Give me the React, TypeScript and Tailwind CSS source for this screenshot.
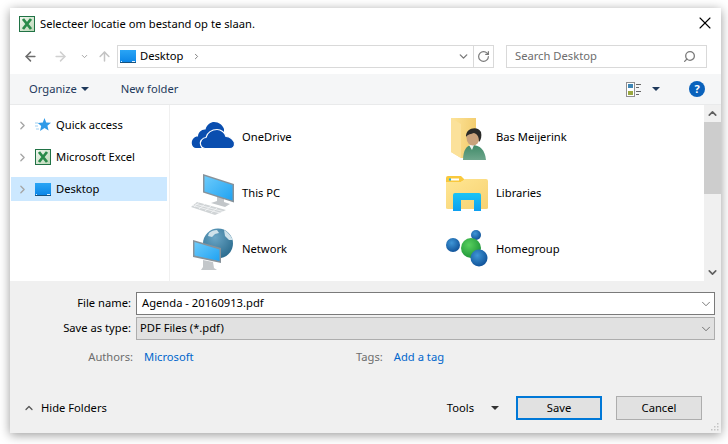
import { ReactNode } from 'react';
import { ChevronRight, ChevronDown, ChevronUp, ArrowLeft, ArrowRight, ArrowUp, RotateCw, Search, X } from 'lucide-react';

const Caret = ({ color = '#1e395b' }: { color?: string }) => (
  <svg width="8" height="4" viewBox="0 0 8 4" className="shrink-0">
    <polygon points="0,0 8,0 4,4" fill={color} />
  </svg>
);

const ExcelIcon = () => (
  <svg width="16" height="16" viewBox="0 0 16 16" className="shrink-0">
    <defs>
      <linearGradient id="xl" x1="0" y1="0" x2="1" y2="1">
        <stop offset="0" stopColor="#f4f8f2" />
        <stop offset="1" stopColor="#b9d6b4" />
      </linearGradient>
    </defs>
    <rect x="0.5" y="0.5" width="15" height="15" fill="url(#xl)" stroke="#207245" />
    <path d="M4 3 L12 13 M12 3 L4 13" stroke="#2a8a4a" strokeWidth="2.8" />
  </svg>
);

const DesktopIcon = () => (
  <svg width="16" height="13" viewBox="0 0 16 13" className="shrink-0">
    <defs>
      <linearGradient id="dk" x1="0" y1="0" x2="0" y2="1">
        <stop offset="0" stopColor="#2aa5f5" />
        <stop offset="1" stopColor="#0a84e6" />
      </linearGradient>
    </defs>
    <rect x="0" y="0" width="16" height="13" fill="url(#dk)" />
    <rect x="0" y="12" width="16" height="1" fill="#16527f" />
    <rect x="12" y="11" width="3" height="1" fill="#dff1fd" />
    <rect x="1" y="11" width="1" height="1" fill="#dff1fd" />
  </svg>
);

const StarIcon = () => (
  <svg width="16" height="14" viewBox="0 0 16 14" className="shrink-0">
    <polygon points="9.5,0 11.2,4.4 16,4.8 12.4,7.8 13.6,12.6 9.5,10 5,13 6.2,8 2.8,5 7.8,4.4" fill="#2f9be8" />
    <path d="M0 5h3M0 8h3M1 11h3" stroke="#9fd0f2" strokeWidth="1" />
  </svg>
);

const OneDriveIcon = () => (
  <svg width="48" height="48" viewBox="0 0 48 48">
    <path d="M7 35 C3 35 1.500 29 4 26 C5.500 24 7 23.500 9 23.500 C9 19 13 16 16.500 16.500 C18 11 22 9 25 9 C30 9 33.500 12 35 16 L35 24 L12 35Z" fill="#0a4eaf" />
    <path d="M16 35.500 C12 35.500 10 30 12.500 27 C14 25 15 24.500 17 24.500 C18 19.500 23 16.500 28 16.500 C32 16.500 36 19.500 37 23.500 C41 23.500 45.500 27 45.500 31 C45.500 33 44 35.500 41 35.500Z" fill="#0a4eaf" stroke="#ffffff" strokeWidth="1.200" />
  </svg>
);

const PcIcon = () => (
  <svg width="48" height="48" viewBox="0 0 48 48">
    <defs>
      <linearGradient id="scr" x1="0" y1="0" x2="1" y2="1">
        <stop offset="0" stopColor="#6ccbfb" />
        <stop offset="1" stopColor="#1fa2f2" />
      </linearGradient>
    </defs>
    <polygon points="28,26 35,29 35,33 41,35 36,38 22,34 28,32" fill="#c2c6c9" />
    <polygon points="14,5 45,15 45,33.500 14,23.500" fill="#87929a" />
    <polygon points="15.500,7 43.500,16 43.500,31.500 15.500,22.500" fill="url(#scr)" />
    <polygon points="8,33 37,41 26,46 2,38" fill="#d0d4d6" />
    <path d="M6 35 L34 42.500 M4 36.500 L31 44 M10 33.500 L5 38 M16 35 L10 40 M22 37 L16 42 M28 39 L22 44" stroke="#f5f6f7" strokeWidth="0.8" />
  </svg>
);

const NetworkIcon = () => (
  <svg width="48" height="48" viewBox="0 0 48 48">
    <defs>
      <radialGradient id="globe" cx="0.4" cy="0.3" r="0.8">
        <stop offset="0" stopColor="#6aa6c6" />
        <stop offset="1" stopColor="#256689" />
      </radialGradient>
      <linearGradient id="scr2" x1="0" y1="0" x2="1" y2="1">
        <stop offset="0" stopColor="#6ccbfb" />
        <stop offset="1" stopColor="#1fa2f2" />
      </linearGradient>
    </defs>
    <circle cx="29" cy="18.500" r="15" fill="url(#globe)" />
    <path d="M20 8 C22 6 25 5 28 5 L30 8 L26 9 L23 12 L19 11Z M35 5 C39 7 42 11 44 15 L40 15 L36 11Z" fill="#cfe2eb" />
    <polygon points="14,35 24,37 25,43 28,45 12,45 14,42" fill="#c3c7ca" />
    <polygon points="4,15 32,23 32,38 4,32" fill="#87929a" />
    <polygon points="5.500,17 30.500,24.500 30.500,36 5.500,30.500" fill="url(#scr2)" />
  </svg>
);

const UserFolderIcon = () => (
  <svg width="48" height="48" viewBox="0 0 48 48">
    <defs>
      <linearGradient id="uf" x1="0" y1="0" x2="1" y2="0.2">
        <stop offset="0" stopColor="#fde49a" />
        <stop offset="1" stopColor="#f3cd6f" />
      </linearGradient>
      <linearGradient id="ub" x1="0" y1="0" x2="0" y2="1">
        <stop offset="0" stopColor="#3f8a68" />
        <stop offset="1" stopColor="#6ea68c" />
      </linearGradient>
    </defs>
    <polygon points="8,5 33,5 33,30 22,45 18,45 8,39" fill="url(#uf)" />
    <path d="M8 5 L18 11 L18 45 L8 39Z" fill="#fbe19a" />
    <path d="M20 47 C20 37 24 32 29 32 C37 32 42 37 43 47Z" fill="url(#ub)" />
    <path d="M26 32 L31 32 L29 37Z" fill="#eef3f0" />
    <ellipse cx="30" cy="24.500" rx="6.500" ry="8" fill="#c9a27c" />
    <path d="M23 24 C22 15 35 12 38 19 C39 23 38 27 36 29 C36 23 34 21 31 20 C28 21 25 21 23 24Z" fill="#2a2a28" />
  </svg>
);

const LibrariesIcon = () => (
  <svg width="48" height="48" viewBox="0 0 48 48">
    <defs>
      <linearGradient id="lib" x1="0" y1="0" x2="1" y2="1">
        <stop offset="0" stopColor="#ffe693" />
        <stop offset="1" stopColor="#f7d272" />
      </linearGradient>
      <linearGradient id="arch" x1="0" y1="0" x2="0" y2="1">
        <stop offset="0" stopColor="#1bc4f5" />
        <stop offset="1" stopColor="#0d9ff0" />
      </linearGradient>
    </defs>
    <path d="M3 9 Q3 7 5 7 L18 7 L22 11 L18 13 L3 13Z" fill="#f9c93d" />
    <rect x="6" y="9.500" width="2" height="2" fill="#22b5ee" />
    <rect x="8" y="9.500" width="8" height="2" fill="#ffffff" />
    <path d="M3 13 L18 13 L22 10 L43 10 Q45 10 45 12 L45 39 Q45 40 43 40 L5 40 Q3 40 3 39Z" fill="url(#lib)" />
    <path d="M10 42 L10 26 Q10 24 12 24 L36 24 Q38 24 38 26 L38 42 L31 42 L31 31 L18 31 L18 42Z" fill="url(#arch)" />
  </svg>
);

const HomegroupIcon = () => (
  <svg width="48" height="48" viewBox="0 0 48 48">
    <defs>
      <radialGradient id="hb" cx="0.4" cy="0.35" r="0.7">
        <stop offset="0" stopColor="#3f96d6" />
        <stop offset="1" stopColor="#0e4f96" />
      </radialGradient>
      <radialGradient id="hg" cx="0.4" cy="0.35" r="0.7">
        <stop offset="0" stopColor="#58cf5e" />
        <stop offset="1" stopColor="#1c9436" />
      </radialGradient>
    </defs>
    <circle cx="10" cy="20" r="7" fill="url(#hb)" />
    <circle cx="33" cy="10" r="5" fill="url(#hb)" />
    <circle cx="28" cy="23" r="10" fill="url(#hg)" />
    <circle cx="36" cy="33" r="8.500" fill="url(#hb)" />
  </svg>
);

const ViewIcon = () => (
  <svg width="15" height="15" viewBox="0 0 15 15">
    <rect x="0.500" y="0.500" width="8" height="14" fill="#ffffff" stroke="#8f8f8f" />
    <rect x="2" y="2" width="5" height="4" fill="#3f86b5" />
    <rect x="2" y="9" width="5" height="4" fill="#9aa83f" />
    <path d="M10 2.500h5M10 5.500h3M10 9.500h5M10 12.500h3" stroke="#666666" />
  </svg>
);

const items: { label: string; icon: ReactNode }[] = [
  { label: 'OneDrive', icon: <OneDriveIcon /> },
  { label: 'Bas Meijerink', icon: <UserFolderIcon /> },
  { label: 'This PC', icon: <PcIcon /> },
  { label: 'Libraries', icon: <LibrariesIcon /> },
  { label: 'Network', icon: <NetworkIcon /> },
  { label: 'Homegroup', icon: <HomegroupIcon /> },
];

const TreeRow = ({ label, icon, selected }: { label: string; icon: ReactNode; selected?: boolean }) => (
  <div className={`flex h-[24px] w-[156px] items-center pl-[5px] ${selected ? 'bg-[#cce8ff]' : ''}`}>
    <ChevronRight size={13} strokeWidth={2.5} className="mr-[6px] shrink-0 text-[#a6a6a6]" />
    <div className="flex w-[21px] shrink-0 items-center">{icon}</div>
    <span>{label}</span>
  </div>
);

export default function App() {
  return (
    <div className="h-[444px] w-[728px] overflow-hidden bg-white pl-[10px] pt-[8px] font-['Noto_Sans',sans-serif] text-[11.200px] text-black">
      <div className="relative flex h-[425px] w-[711px] flex-col bg-white shadow-[0_2px_10px_rgba(0,0,0,0.4)]">
        <div className="flex h-[32px] shrink-0 items-center pl-[9px] pr-[6px]">
          <ExcelIcon />
          <span className="ml-[5px] grow">Selecteer locatie om bestand op te slaan.</span>
          <X size={20} strokeWidth={1.3} className="-mt-[2px] text-black" />
        </div>

        <div className="flex h-[34px] shrink-0 items-start pl-[13px] pt-[5px]">
          <div className="flex h-[23px] items-center">
            <ArrowLeft size={15} strokeWidth={2.4} className="text-[#6d6d6d]" />
            <ArrowRight size={15} strokeWidth={2.4} className="ml-[15px] text-[#d0d0d0]" />
            <ChevronDown size={9} strokeWidth={2.5} className="ml-[12px] text-[#a0a0a0]" />
            <ArrowUp size={15} strokeWidth={2.4} className="ml-[8px] text-[#c4c4c4]" />
          </div>
          <div className="ml-[5px] flex h-[23px] w-[377px] items-center border border-[#d9d9d9]">
            <div className="ml-[2px]"><DesktopIcon /></div>
            <span className="ml-[4px]">Desktop</span>
            <ChevronRight size={9} strokeWidth={2.5} className="ml-[8px] text-[#7a7a7a]" />
            <div className="grow" />
            <ChevronDown size={13} strokeWidth={2.5} className="mr-[3px] text-[#7a7a7a]" />
            <div className="flex h-full w-[20px] items-center justify-center border-l border-[#d9d9d9]">
              <RotateCw size={13} strokeWidth={2.2} className="text-[#7a7a7a]" />
            </div>
          </div>
          <div className="ml-[12px] flex h-[23px] w-[201px] items-center justify-between border border-[#d9d9d9] pl-[8px] pr-[10px] text-[#6d6d6d]">
            <span>Search Desktop</span>
            <Search size={13} strokeWidth={2.4} className="-scale-x-100 text-[#7a7a7a]" />
          </div>
        </div>

        <div className="flex h-[31px] shrink-0 items-center border-b border-[#e9eaeb] bg-[#f5f6f7] pl-[19px] pr-[16px] text-[#1e395b]">
          <span>Organize</span>
          <div className="ml-[4px]"><Caret /></div>
          <span className="ml-[32px]">New folder</span>
          <div className="grow" />
          <ViewIcon />
          <div className="ml-[11px]"><Caret /></div>
          <div className="ml-[29px] flex h-[16px] w-[16px] items-center justify-center rounded-full bg-[#0a62bc] text-[11px] font-bold text-white">?</div>
        </div>

        <div className="flex h-[176px] shrink-0">
          <div className="flex w-[160px] shrink-0 flex-col gap-[8px] border-r border-[#f0f0f0] pl-[1px] pt-[8px]">
            <TreeRow label="Quick access" icon={<StarIcon />} />
            <TreeRow label="Microsoft Excel" icon={<ExcelIcon />} />
            <TreeRow label="Desktop" icon={<DesktopIcon />} selected />
          </div>
          <div className="grid grow grid-cols-[254px_1fr] auto-rows-[56px] pl-[19px] pt-[4px]">
            {items.map((item) => (
              <div key={item.label} className="flex items-center gap-[5px]">
                {item.icon}
                <span>{item.label}</span>
              </div>
            ))}
          </div>
          <div className="flex w-[17px] shrink-0 flex-col items-center bg-[#f0f0f0]">
            <div className="flex h-[17px] w-full items-center justify-center">
              <ChevronUp size={13} strokeWidth={3} className="text-[#606060]" />
            </div>
            <div className="h-[72px] w-full bg-[#cdcdcd]" />
            <div className="grow" />
            <div className="flex h-[17px] w-full items-center justify-center">
              <ChevronDown size={13} strokeWidth={3} className="text-[#606060]" />
            </div>
          </div>
        </div>

        <div className="flex grow flex-col bg-[#f0f0f0] pl-[5px] pr-[6px] pt-[11px]">
          <div className="flex h-[23px] items-center">
            <span className="w-[116px] text-right">File name:</span>
            <div className="ml-[5px] flex h-[23px] grow items-center justify-between border border-[#7a7a7a] bg-white pl-[5px] pr-[1px]">
              <span>Agenda - 20160913.pdf</span>
              <ChevronDown size={14} strokeWidth={1.2} className="text-[#444444]" />
            </div>
          </div>
          <div className="mt-[2px] flex h-[23px] items-center">
            <span className="w-[116px] text-right">Save as type:</span>
            <div className="ml-[5px] flex h-[23px] grow items-center justify-between border border-[#adadad] bg-[#e1e1e1] pl-[3px] pr-[1px]">
              <span>PDF Files (*.pdf)</span>
              <ChevronDown size={14} strokeWidth={1.2} className="text-[#444444]" />
            </div>
          </div>
          <div className="mt-[7px] flex h-[20px] items-center">
            <span className="w-[118px] text-right text-[#6d6d6d]">Authors:</span>
            <span className="ml-[11px] w-[212px] text-[#0066cc]">Microsoft</span>
            <span className="text-[#6d6d6d]">Tags:</span>
            <span className="ml-[11px] text-[#0066cc]">Add a tag</span>
          </div>
          <div className="mt-[29px] flex items-center pr-[13px]">
            <ChevronUp size={12} strokeWidth={2.5} className="ml-[8px] text-[#555555]" />
            <span className="ml-[6px] grow">Hide Folders</span>
            <span>Tools</span>
            <div className="ml-[17px]"><Caret color="#333333" /></div>
            <button className="ml-[17px] h-[24px] w-[86px] border-2 border-[#0078d7] bg-[#e1e1e1]">Save</button>
            <button className="ml-[14px] h-[24px] w-[86px] border border-[#adadad] bg-[#e1e1e1]">Cancel</button>
          </div>
        </div>

        <svg width="9" height="9" viewBox="0 0 9 9" className="absolute bottom-[2px] right-[2px]">
          <path d="M7 1h1.500v1.500H7zM4 4h1.500v1.500H4zM7 4h1.500v1.500H7zM1 7h1.500v1.500H1zM4 7h1.500v1.500H4zM7 7h1.500v1.500H7z" fill="#c4c4c4" />
        </svg>
      </div>
    </div>
  );
}
